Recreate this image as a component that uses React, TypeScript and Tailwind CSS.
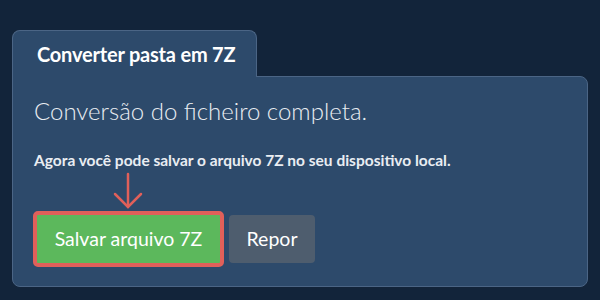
export default function App() {
  return (
    <div
      className="w-[600px] h-[300px] bg-[#12243a] px-3 pt-[30px] text-white"
      style={{ fontFamily: 'Lato, "Open Sans", sans-serif' }}
    >
      <div className="relative z-10 -mb-px w-[245px] h-[47px] rounded-t-lg border border-b-0 border-[#4b6585] bg-[#2d4a6b] pl-6 pt-[13px]">
        <h2 className="text-[20px] font-bold leading-none tracking-[-0.2px]">Converter pasta em 7Z</h2>
      </div>
      <div className="h-[211px] rounded-b-lg rounded-tr-lg border border-[#4b6585] bg-[#2d4a6b] pl-5 pt-[20px]">
        <p className="pl-px text-[24px] font-light leading-7 text-[#e9edf2]">Conversão do ficheiro completa.</p>
        <p className="mt-[25px] pl-px text-[15.5px] font-bold leading-5 text-[#e9edf2]">
          Agora você pode salvar o arquivo 7Z no seu dispositivo local.
        </p>
        <div className="mt-[41px] flex items-center gap-[5px]">
          <div className="relative">
            <svg
              className="absolute left-[79px] -top-[39px]"
              width="32"
              height="38"
              viewBox="0 0 32 38"
              fill="none"
              stroke="#e0605a"
              strokeWidth="2.5"
              strokeLinecap="round"
            >
              <path d="M16 2 V35" />
              <path d="M3 22 L16 35 L29 22" />
            </svg>
            <button className="h-[56px] w-[191px] rounded-[5px] border-[4px] border-[#e0605a] bg-[#5cb85c] text-[19.5px] text-white">
              Salvar arquivo 7Z
            </button>
          </div>
          <button className="h-[48px] w-[86px] rounded-[4px] bg-[#4e5d6e] text-[19.5px] text-white">Repor</button>
        </div>
      </div>
    </div>
  )
}
